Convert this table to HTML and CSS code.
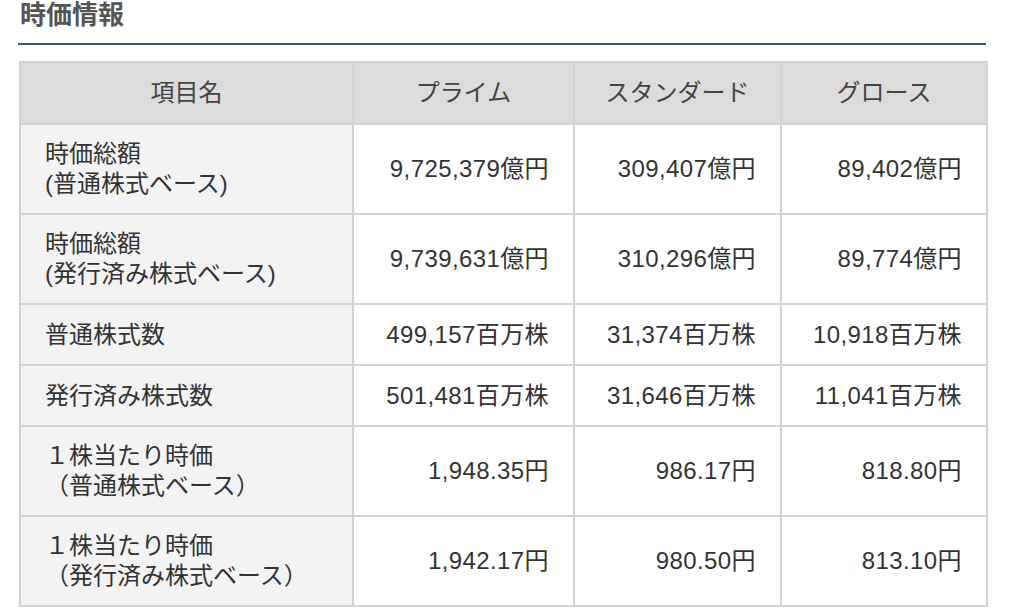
FILE: index.html
```html
<!DOCTYPE html>
<html lang="ja">
<head>
<meta charset="utf-8">
<link rel="stylesheet" href="styles.css">
</head>
<body>
<div class="page">
  <h2 class="title">時価情報</h2>
  <table class="cap">
    <colgroup>
      <col class="c1"><col class="c2"><col class="c3"><col class="c4">
    </colgroup>
    <thead>
      <tr class="head"><th>項目名</th><th>プライム</th><th>スタンダード</th><th>グロース</th></tr>
    </thead>
    <tbody>
      <tr class="tall"><th>時価総額<br>(普通株式ベース)</th><td>9,725,379億円</td><td>309,407億円</td><td>89,402億円</td></tr>
      <tr class="tall"><th>時価総額<br>(発行済み株式ベース)</th><td>9,739,631億円</td><td>310,296億円</td><td>89,774億円</td></tr>
      <tr class="short"><th>普通株式数</th><td>499,157百万株</td><td>31,374百万株</td><td>10,918百万株</td></tr>
      <tr class="short"><th>発行済み株式数</th><td>501,481百万株</td><td>31,646百万株</td><td>11,041百万株</td></tr>
      <tr class="tall"><th>１株当たり時価<br>（普通株式ベース）</th><td>1,948.35円</td><td>986.17円</td><td>818.80円</td></tr>
      <tr class="tall"><th>１株当たり時価<br>（発行済み株式ベース）</th><td>1,942.17円</td><td>980.50円</td><td>813.10円</td></tr>
    </tbody>
  </table>
</div>
</body>
</html>
```

FILE: styles.css
```css
html, body {
  margin: 0;
  padding: 0;
  background: #ffffff;
}
body {
  font-family: "Liberation Sans", "Noto Sans CJK JP", sans-serif;
  color: #333333;
}
.page {
  padding: 0 30px 0 18px;
}
.title {
  margin: 0 0 16px 0;
  font-size: 26px;
  line-height: 30px;
  font-weight: bold;
  color: #555555;
  padding: 0 0 13px 2px;
  border-bottom: 2px solid #3d5a75;
}
.cap {
  margin-left: 1px;
  width: 967px;
  border-collapse: collapse;
  table-layout: fixed;
  font-size: 24px;
  line-height: 30px;
}
.c1 { width: 333px; }
.c2 { width: 221px; }
.c3 { width: 207px; }
.c4 { width: 206px; }
.cap th, .cap td {
  border: 2px solid #d3d3d3;
  padding: 0 24px;
  font-weight: normal;
  box-sizing: border-box;
}
.cap thead th {
  background: #dcdcdc;
  text-align: center;
  color: #444444;
}
.cap tbody th {
  background: #f3f3f3;
  text-align: left;
}
.cap tbody td {
  text-align: right;
  background: #ffffff;
  letter-spacing: 0.4px;
}
.head { height: 62px; }
.tall { height: 90px; }
.short { height: 61px; }
```
